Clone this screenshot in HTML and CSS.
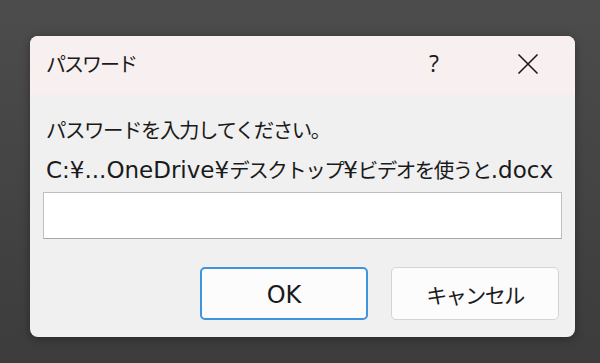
FILE: index.html
```html
<!DOCTYPE html>
<html lang="ja">
<head>
<meta charset="utf-8">
<link rel="stylesheet" href="styles.css">
</head>
<body>
<div class="dialog">
  <div class="titlebar">
    <span class="title">パスワード</span>
    <span class="help">?</span>
    <span class="close">
      <svg width="22" height="22" viewBox="0 0 22 22"><path d="M1.5 1.5 L20.5 20.5 M20.5 1.5 L1.5 20.5" stroke="#1a1a1a" stroke-width="1.6" fill="none"/></svg>
    </span>
  </div>
  <div class="content">
    <p class="msg">パスワードを入力してください。</p>
    <p class="path"><span class="lat">C:¥...OneDrive¥</span>デスクトップ<span class="lat">¥</span>ビデオを使うと<span class="lat">.docx</span></p>
    <div class="input"></div>
    <div class="buttons">
      <button class="btn primary"><span class="lat">OK</span></button>
      <button class="btn">キャンセル</button>
    </div>
  </div>
</div>
</body>
</html>
```
FILE: styles.css
```css
html, body {
  margin: 0;
  padding: 0;
}
body {
  width: 600px;
  height: 363px;
  overflow: hidden;
  background: linear-gradient(#4c4c4c, #3c3c3c);
  font-family: "Noto Sans CJK JP", "Noto Sans", sans-serif;
  color: #1a1a1a;
  padding-top: 36px;
  box-sizing: border-box;
}
.dialog {
  margin-left: 30px;
  width: 545px;
  height: 301px;
  border-radius: 8px;
  background: #f0f0f0;
  overflow: hidden;
  box-shadow: 0 2px 8px rgba(0,0,0,0.35);
}
.titlebar {
  height: 59px;
  background: #f8f0f0;
  display: flex;
  align-items: center;
  padding-left: 16px;
}
.title {
  font-size: 20px;
  letter-spacing: -2px;
  flex: 1;
  margin-top: -4px;
}
.help {
  font-size: 23px;
  font-weight: 400;
  width: 20px;
  margin-right: 68px;
  margin-top: -5px;
  font-family: "Open Sans", sans-serif;
}
.close {
  width: 22px;
  height: 22px;
  margin-right: 36px;
  margin-top: -4px;
  display: flex;
}
.content {
  padding: 14px 13px 0 13px;
}
.msg, .path {
  margin: 0;
  padding-left: 3px;
  font-family: "Noto Sans CJK JP", sans-serif;
  font-size: 20.5px;
  letter-spacing: -1.5px;
  line-height: 40px;
  height: 40px;
  white-space: nowrap;
}
.lat {
  font-family: "DejaVu Sans", sans-serif;
  font-size: 23px;
  letter-spacing: 0;
}
.input {
  margin-top: 3px;
  height: 47px;
  box-sizing: border-box;
  background: #ffffff;
  border: 1px solid #bfbfbf;
  border-bottom-color: #a8a8a8;
}
.buttons {
  display: flex;
  justify-content: flex-end;
  gap: 23px;
  margin-top: 28px;
  padding-right: 3px;
}
.btn {
  width: 168px;
  height: 53px;
  box-sizing: border-box;
  border: 1px solid #d4d4d4;
  border-radius: 5px;
  background: #fcfcfc;
  font-family: "Noto Sans CJK JP", sans-serif;
  font-size: 21px;
  letter-spacing: -1.5px;
  color: #1a1a1a;
  padding: 0;
}
.btn .lat {
  font-size: 24px;
}
.btn.primary {
  border: 2px solid #3f94e0;
}
```
